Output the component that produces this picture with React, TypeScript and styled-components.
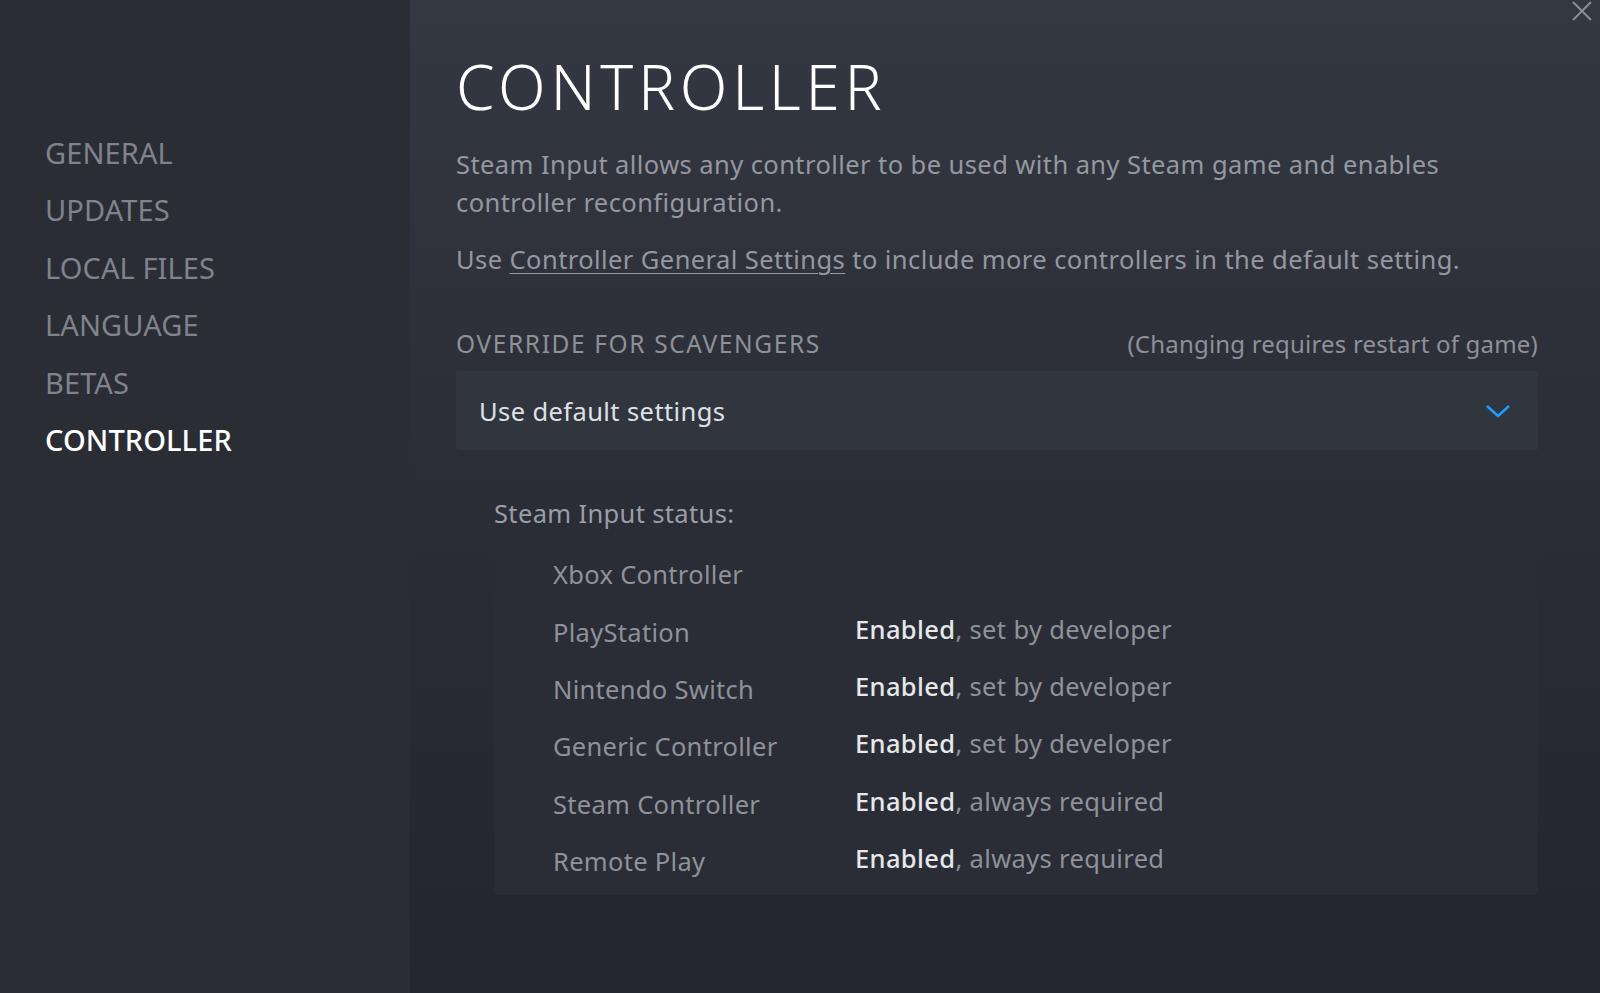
import React from "react";
import styled, { createGlobalStyle } from "styled-components";

const GlobalStyle = createGlobalStyle`
  html, body {
    margin: 0;
    padding: 0;
    background: #24272e;
  }
  body {
    font-family: "Noto Sans", "Open Sans", sans-serif;
  }
`;

const tabs = ["GENERAL", "UPDATES", "LOCAL FILES", "LANGUAGE", "BETAS", "CONTROLLER"];

const statusRows = [
  { name: "Xbox Controller", value: null },
  { name: "PlayStation", value: "set by developer" },
  { name: "Nintendo Switch", value: "set by developer" },
  { name: "Generic Controller", value: "set by developer" },
  { name: "Steam Controller", value: "always required" },
  { name: "Remote Play", value: "always required" },
];

// Layout
const Window = styled.div`
  display: flex;
  width: 1600px;
  height: 993px;
  overflow: hidden;
  position: relative;
`;

const Sidebar = styled.nav`
  width: 410px;
  flex-shrink: 0;
  background: #2a2d34;
  padding: 124px 0 0 45px;
  box-sizing: border-box;
  display: flex;
  flex-direction: column;
`;

const Tab = styled.div<{ $active?: boolean }>`
  font-size: 29px;
  line-height: 57.4px;
  height: 57.4px;
  color: ${(p) => (p.$active ? "#ffffff" : "#7f838b")};
  font-weight: ${(p) => (p.$active ? 500 : 400)};
  letter-spacing: 0.1px;
`;

const Main = styled.main`
  flex: 1;
  background: linear-gradient(180deg, #343842 0%, #2b2e37 45%, #23262d 100%);
  padding: 46px 62px 0 46px;
  box-sizing: border-box;
  display: flex;
  flex-direction: column;
`;

const Title = styled.h1`
  margin: 0;
  font-size: 62px;
  font-weight: 300;
  letter-spacing: 4.7px;
  line-height: 80px;
  color: #ffffff;
`;

const Intro = styled.div`
  margin-top: 19px;
`;

const Paragraph = styled.p`
  margin: 0;
  font-size: 25.5px;
  letter-spacing: 0.42px;
  line-height: 38px;
  color: #9498a0;
  & + & {
    margin-top: 19px;
  }
`;

const Link = styled.a`
  color: #9498a0;
  text-decoration: underline;
  text-underline-offset: 4px;
  text-decoration-thickness: 1px;
`;

const OverrideHeader = styled.div`
  margin-top: 45px;
  display: flex;
  justify-content: space-between;
  align-items: center;
  height: 40px;
`;

const OverrideLabel = styled.span`
  font-size: 24.5px;
  color: #8d9199;
  letter-spacing: 1.6px;
`;

const OverrideNote = styled.span`
  font-size: 24px;
  letter-spacing: 0.2px;
  color: #8d9199;
`;

const Dropdown = styled.div`
  margin-top: 8px;
  height: 79px;
  background: #31353e;
  border-radius: 3px;
  display: flex;
  align-items: center;
  justify-content: space-between;
  padding: 0 27px 0 23px;
  box-sizing: border-box;
`;

const DropdownText = styled.span`
  font-size: 25.5px;
  letter-spacing: 0.4px;
  color: #dfe1e4;
`;

const StatusSection = styled.div`
  margin-left: 38px;
  margin-top: 43px;
`;

const StatusTitle = styled.div`
  font-size: 25.5px;
  letter-spacing: 0.35px;
  line-height: 40px;
  color: #9a9ea6;
`;

const StatusBox = styled.div`
  margin-top: 7.5px;
  background: #2a2d35;
  border-radius: 4px;
  padding: 5px 0 5px 59px;
  display: grid;
  grid-template-columns: 302px 1fr;
  grid-auto-rows: 57.4px;
  align-items: center;
`;

const DeviceName = styled.span`
  font-size: 25.5px;
  color: #8e9299;
  letter-spacing: 0.3px;
`;

const StatusValue = styled.span`
  font-size: 25.5px;
  letter-spacing: 0.35px;
  color: #8e9299;
  position: relative;
  top: -3px;
`;

const Strong = styled.span`
  color: #e6e8ea;
  font-weight: 500;
`;

const CloseButton = styled.div`
  position: absolute;
  top: 0;
  right: 7px;
  width: 22px;
  height: 22px;
`;

export default function App() {
  return (
    <>
      <GlobalStyle />
      <Window>
        <Sidebar>
          {tabs.map((t) => (
            <Tab key={t} $active={t === "CONTROLLER"}>
              {t}
            </Tab>
          ))}
        </Sidebar>
        <Main>
          <Title>CONTROLLER</Title>
          <Intro>
            <Paragraph>
              Steam Input allows any controller to be used with any Steam game and enables
              controller reconfiguration.
            </Paragraph>
            <Paragraph>
              Use <Link>Controller General Settings</Link> to include more controllers in the
              default setting.
            </Paragraph>
          </Intro>
          <OverrideHeader>
            <OverrideLabel>OVERRIDE FOR SCAVENGERS</OverrideLabel>
            <OverrideNote>(Changing requires restart of game)</OverrideNote>
          </OverrideHeader>
          <Dropdown>
            <DropdownText>Use default settings</DropdownText>
            <svg width="26" height="16" viewBox="0 0 26 16">
              <path d="M2 3 L13 13 L24 3" fill="none" stroke="#1a9fff" strokeWidth="2.6" />
            </svg>
          </Dropdown>
          <StatusSection>
            <StatusTitle>Steam Input status:</StatusTitle>
            <StatusBox>
              {statusRows.map((r) => (
                <React.Fragment key={r.name}>
                  <DeviceName>{r.name}</DeviceName>
                  <StatusValue>
                    {r.value && (
                      <>
                        <Strong>Enabled</Strong>, {r.value}
                      </>
                    )}
                  </StatusValue>
                </React.Fragment>
              ))}
            </StatusBox>
          </StatusSection>
        </Main>
        <CloseButton>
          <svg width="22" height="22" viewBox="0 0 22 22">
            <path d="M2 2 L20 20 M20 2 L2 20" stroke="#8a8f96" strokeWidth="2" />
          </svg>
        </CloseButton>
      </Window>
    </>
  );
}
